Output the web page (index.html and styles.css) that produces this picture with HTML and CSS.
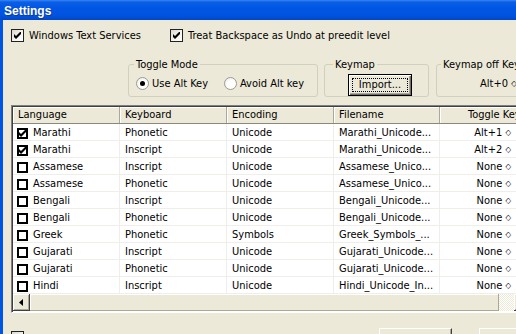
FILE: index.html
```html
<!DOCTYPE html>
<html>
<head>
<meta charset="utf-8">
<title>Settings</title>
<link rel="stylesheet" href="styles.css">
</head>
<body>
<div class="window">
  <div class="titlebar">Settings</div>
  <div class="frame">
    <div class="dialog">
      <div class="top-checks">
        <label class="check first"><span class="box"><svg class="tick" width="7" height="7" viewBox="0 0 7 7"><path d="M0 2 L2 4 L6 0 L7 0 L7 2 L2 7 L0 5 Z" fill="#000"/></svg></span>Windows Text Services</label>
        <label class="check"><span class="box"><svg class="tick" width="7" height="7" viewBox="0 0 7 7"><path d="M0 2 L2 4 L6 0 L7 0 L7 2 L2 7 L0 5 Z" fill="#000"/></svg></span>Treat Backspace as Undo at preedit level</label>
      </div>

      <div class="groups">
        <fieldset class="group toggle">
          <legend>Toggle Mode</legend>
          <div class="group-body">
            <label class="radio first"><span class="dot on"></span>Use Alt Key</label>
            <label class="radio"><span class="dot"></span>Avoid Alt key</label>
          </div>
        </fieldset>
        <fieldset class="group keymap">
          <legend>Keymap</legend>
          <div class="group-body">
            <button class="btn-default"><span class="focus">Import...</span></button>
          </div>
        </fieldset>
        <fieldset class="group off">
          <legend>Keymap off Key</legend>
          <div class="group-body">
            <span class="hotkey">Alt+0 <span class="dia">◇</span></span>
          </div>
        </fieldset>
      </div>

      <div class="list">
        <div class="lrow head">
          <div class="hc">Language</div>
          <div class="hc">Keyboard</div>
          <div class="hc">Encoding</div>
          <div class="hc">Filename</div>
          <div class="hc last">Toggle Key</div>
        </div>
        <div class="lrow"><div class="c lang"><span class="lbox on"><svg width="7" height="7" viewBox="0 0 7 7"><path d="M0 2 L2 4 L6 0 L7 0 L7 2 L2 7 L0 5 Z" fill="#000"/></svg></span>Marathi</div><div class="c">Phonetic</div><div class="c">Unicode</div><div class="c">Marathi_Unicode...</div><div class="c key">Alt+1 <span class="dia">◇</span></div></div>
        <div class="lrow"><div class="c lang"><span class="lbox on"><svg width="7" height="7" viewBox="0 0 7 7"><path d="M0 2 L2 4 L6 0 L7 0 L7 2 L2 7 L0 5 Z" fill="#000"/></svg></span>Marathi</div><div class="c">Inscript</div><div class="c">Unicode</div><div class="c">Marathi_Unicode...</div><div class="c key">Alt+2 <span class="dia">◇</span></div></div>
        <div class="lrow"><div class="c lang"><span class="lbox"></span>Assamese</div><div class="c">Inscript</div><div class="c">Unicode</div><div class="c">Assamese_Unico...</div><div class="c key">None <span class="dia">◇</span></div></div>
        <div class="lrow"><div class="c lang"><span class="lbox"></span>Assamese</div><div class="c">Phonetic</div><div class="c">Unicode</div><div class="c">Assamese_Unico...</div><div class="c key">None <span class="dia">◇</span></div></div>
        <div class="lrow"><div class="c lang"><span class="lbox"></span>Bengali</div><div class="c">Inscript</div><div class="c">Unicode</div><div class="c">Bengali_Unicode...</div><div class="c key">None <span class="dia">◇</span></div></div>
        <div class="lrow"><div class="c lang"><span class="lbox"></span>Bengali</div><div class="c">Phonetic</div><div class="c">Unicode</div><div class="c">Bengali_Unicode...</div><div class="c key">None <span class="dia">◇</span></div></div>
        <div class="lrow"><div class="c lang"><span class="lbox"></span>Greek</div><div class="c">Phonetic</div><div class="c">Symbols</div><div class="c">Greek_Symbols_...</div><div class="c key">None <span class="dia">◇</span></div></div>
        <div class="lrow"><div class="c lang"><span class="lbox"></span>Gujarati</div><div class="c">Inscript</div><div class="c">Unicode</div><div class="c">Gujarati_Unicode...</div><div class="c key">None <span class="dia">◇</span></div></div>
        <div class="lrow"><div class="c lang"><span class="lbox"></span>Gujarati</div><div class="c">Phonetic</div><div class="c">Unicode</div><div class="c">Gujarati_Unicode...</div><div class="c key">None <span class="dia">◇</span></div></div>
        <div class="lrow"><div class="c lang"><span class="lbox"></span>Hindi</div><div class="c">Inscript</div><div class="c">Unicode</div><div class="c">Hindi_Unicode_In...</div><div class="c key">None <span class="dia">◇</span></div></div>
        <div class="hscroll">
          <div class="sbtn"><svg width="4" height="7" viewBox="0 0 4 7"><path d="M4 0 L0 3.5 L4 7 Z" fill="#000"/></svg></div>
          <div class="thumb"></div>
          <div class="track"></div>
          <div class="sbtn"></div>
        </div>
      </div>

      <div class="bottom">
        <span class="box small"></span>
        <div class="bbtns">
          <span class="pbtn"></span>
          <span class="pbtn"></span>
        </div>
      </div>
    </div>
  </div>
</div>
</body>
</html>
```
FILE: styles.css
```css
* { box-sizing: border-box; }
html, body { margin: 0; padding: 0; }
body {
  width: 516px;
  height: 334px;
  overflow: hidden;
  background: #ece9d8;
  font-family: "DejaVu Sans Condensed", "DejaVu Sans", sans-serif;
  font-size: 11px;
  color: #000;
}
.window {
  width: 516px;
  height: 334px;
  display: flex;
  flex-direction: column;
  overflow: hidden;
}
.titlebar {
  flex: none;
  height: 20px;
  padding: 4px 0 0 4px;
  line-height: 14px;
  color: #fff;
  font: bold 12px/14px "Liberation Sans", sans-serif;
  background: linear-gradient(#3b86f2 0, #0b5fe6 2px, #0056e4 40%, #0053df 80%, #0046c6 100%);
  text-shadow: 1px 1px 0 #0a3c9c;
}
.frame {
  flex: 1;
  display: flex;
  min-height: 0;
  border-left: 3px solid #0055e5;
}
.dialog {
  flex: 1;
  min-width: 0;
  overflow: hidden;
  padding: 9px 0 0 8px;
}

/* top checkboxes */
.top-checks {
  display: flex;
  height: 13px;
  align-items: center;
}
.check {
  display: flex;
  align-items: center;
  gap: 5px;
  white-space: nowrap;
}
.check.first { width: 159px; flex: none; }
.box {
  flex: none;
  width: 13px;
  height: 13px;
  border: 1px solid #222;
  background: linear-gradient(135deg, #d8d7d0, #f6f6f2 60%, #fff);
  display: flex;
  align-items: center;
  justify-content: center;
}

/* group boxes */
.groups {
  display: flex;
  margin: 16px 0 0 117px;
}
.group {
  margin: 0;
  padding: 0;
  min-width: 0;
  border: 1px solid #d0d0bf;
  border-radius: 3px;
  flex: none;
}
.group legend {
  padding: 0 2px;
  margin-left: 5px;
  line-height: 13px;
}
.group-body {
  height: 25px;
  display: flex;
  align-items: center;
}
.toggle { width: 190px; }
.toggle .group-body { padding-left: 7px; }
.keymap { width: 105px; margin-left: 6px; }
.keymap legend { margin-left: 8px; }
.keymap .group-body { padding-left: 23px; align-items: flex-end; }
.off { width: 110px; margin-left: 7px; }
.off legend { margin-left: 4px; }
.off .group-body { padding-left: 43px; }

.radio {
  display: flex;
  align-items: center;
  gap: 3px;
  white-space: nowrap;
}
.radio.first { width: 88px; flex: none; }
.dot {
  width: 13px;
  height: 13px;
  border-radius: 50%;
  border: 1px solid #9c9b94;
  background: radial-gradient(circle at 60% 60%, #fff 40%, #e6e5df);
  display: flex;
  align-items: center;
  justify-content: center;
}
.dot.on::after {
  content: "";
  width: 5px;
  height: 5px;
  border-radius: 50%;
  background: #000;
}

.btn-default {
  width: 64px;
  height: 22px;
  margin: 0;
  padding: 3px;
  border: 1px solid #000;
  background: #ece9d8;
  box-shadow: inset 1px 1px 0 #fff, inset -1px -1px 0 #716f64, inset -2px -2px 0 #aca899;
  font: inherit;
  color: #000;
  display: flex;
}
.focus {
  flex: 1;
  border: 1px dotted #000;
  display: flex;
  align-items: center;
  justify-content: center;
  line-height: 12px;
}
.hotkey { white-space: nowrap; }
.dia { font-size: 8px; vertical-align: 1px; }

/* list view */
.list {
  margin-top: 8px;
  width: 560px;
  border-top: 1px solid #808080;
  border-left: 1px solid #808080;
  border-bottom: 1px solid #fff;
  box-shadow: inset 1px 1px 0 #404040;
  background: #fff;
  padding: 1px 0 1px 1px;
}
.lrow {
  display: grid;
  grid-template-columns: 107px 107px 107px 106px 120px;
  height: 17px;
  border-bottom: 1px solid #efeee8;
}
.lrow.head {
  border-bottom: 1px solid #8a887c;
  background: #ece9d8;
}
.hc {
  padding-left: 5px;
  line-height: 16px;
  white-space: nowrap;
  border-right: 1px solid #aca899;
  box-shadow: inset 1px 1px 0 #fff;
}
.hc.last { padding-left: 28px; border-right: 0; }
.c {
  padding-left: 5px;
  line-height: 18px;
  white-space: nowrap;
  overflow: hidden;
  border-right: 1px solid #efeee8;
}
.c.lang {
  padding-left: 4px;
  display: flex;
  align-items: flex-start;
  gap: 5px;
}
.c.key {
  text-align: right;
  padding: 0 9px 0 0;
  width: 80px;
  border-right: 0;
}
.lbox {
  flex: none;
  width: 11px;
  height: 11px;
  margin-top: 4px;
  border: 2px solid #000;
  background: #fff;
  display: flex;
  align-items: center;
  justify-content: center;
}

.hscroll {
  display: flex;
  height: 17px;
  background: #ece9d8;
}
.sbtn {
  flex: none;
  width: 17px;
  height: 17px;
  background: #ece9d8;
  border-right: 1px solid #404040;
  border-bottom: 1px solid #404040;
  box-shadow: inset 1px 1px 0 #fff, inset -1px -1px 0 #aca899;
  display: flex;
  align-items: center;
  justify-content: center;
}
.thumb {
  flex: none;
  width: 469px;
  height: 17px;
  border-right: 1px solid #aca899;
  border-bottom: 1px solid #aca899;
  box-shadow: inset 1px 1px 0 #fff;
}
.track {
  flex: none;
  width: 15px;
  height: 17px;
  background-color: #fff;
  background-image: repeating-conic-gradient(#ece9d8 0 25%, #fff 0 50%);
  background-size: 2px 2px;
}

.bottom {
  display: flex;
  align-items: flex-start;
  margin-top: 15px;
}
.box.small { margin-top: 3px; }
.bbtns {
  display: flex;
  margin-left: 355px;
  gap: 27px;
}
.pbtn {
  width: 73px;
  height: 23px;
  background: #ece9d8;
  border-top: 1px solid #fff;
  border-left: 1px solid #fff;
  border-right: 1px solid #404040;
  box-shadow: inset -1px 0 0 #aca899;
}
```
